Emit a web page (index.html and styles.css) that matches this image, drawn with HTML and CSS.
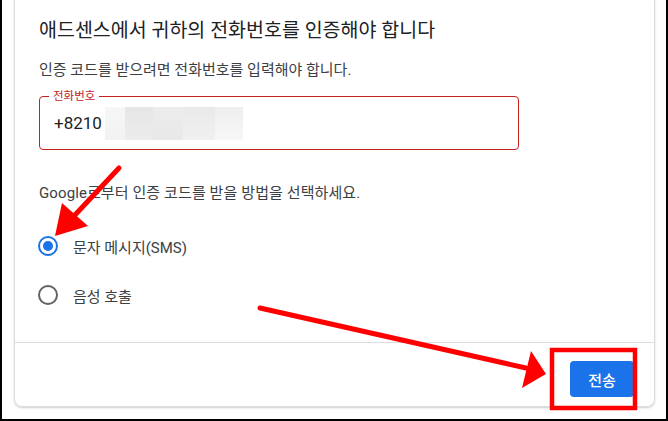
FILE: index.html
```html
<!DOCTYPE html>
<html lang="ko">
<head>
    <meta charset="UTF-8">
    <meta name="viewport" content="width=device-width, initial-scale=1.0">
    <title>전화번호 인증</title>
<link rel="stylesheet" href="styles.css">
</head>
<body>

<div class="frame">
    <div class="card">
        <div class="content">
            <div class="title">애드센스에서 귀하의 전화번호를 인증해야 합니다</div>
            <div class="sub">인증 코드를 받으려면 전화번호를 입력해야 합니다.</div>

            <div class="field">
                <span class="field-label">전화번호</span>
                <span class="field-value">+8210</span>
                <span class="blur">
                    <i class="b1"></i><i class="b2"></i><i class="b3"></i><i class="b4"></i><i class="b5"></i>
                </span>
            </div>

            <div class="sub choose">Google로부터 인증 코드를 받을 방법을 선택하세요.</div>

            <label class="radio checked"><span class="dot"></span>문자 메시지(SMS)</label>
            <label class="radio"><span class="dot"></span>음성 호출</label>
        </div>
        <div class="footer">
            <button class="send">전송</button>
        </div>
    </div>

    <!-- annotations drawn on top of the screenshot -->
    <svg class="marks" width="668" height="421" viewBox="0 0 668 421">
        <line x1="119" y1="168" x2="74" y2="216" stroke="#f00" stroke-width="5" stroke-linecap="round"/>
        <polygon points="55,236 62,203 88,226" fill="#f00"/>
        <line x1="260" y1="308" x2="526" y2="368" stroke="#f00" stroke-width="5" stroke-linecap="round"/>
        <polygon points="546,374 531,351 522,388" fill="#f00"/>
        <rect x="552" y="350" width="83" height="58" fill="none" stroke="#f00" stroke-width="4.5"/>
    </svg>
</div>

</body>
</html>
```

FILE: styles.css
```css
body {
    margin: 0;
    background: #fff;
    font-family: Roboto, "Noto Sans CJK KR", sans-serif;
}

.frame {
    position: relative;
    width: 668px;
    height: 421px;
    box-sizing: border-box;
    border: 2px solid #000;
    border-top: none;
    padding-left: 12px;
}

.card {
    width: 641px;
    height: 407px;
    box-sizing: border-box;
    border: 1px solid #dadce0;
    border-top: none;
    border-radius: 0 0 8px 8px;
    box-shadow: 0 1px 2px rgba(60, 64, 67, 0.25);
    display: flex;
    flex-direction: column;
}

.content {
    flex: 1;
    padding: 18px 0 0 24px;
    border-bottom: 1px solid #dadce0;
}

.title {
    font-size: 19.5px;
    line-height: 26px;
    color: #202124;
}

.sub {
    margin-top: 16px;
    font-size: 15px;
    line-height: 20px;
    color: #3c4043;
}

.field {
    position: relative;
    margin-top: 16px;
    width: 480px;
    height: 54px;
    box-sizing: border-box;
    border: 1px solid #c5221f;
    border-radius: 4px;
    display: flex;
    align-items: center;
    padding-left: 14px;
}

.field-label {
    position: absolute;
    top: -8px;
    left: 9px;
    padding: 0 4px;
    background: #fff;
    font-size: 11.5px;
    line-height: 14px;
    color: #c5221f;
}

.field-value {
    font-size: 17px;
    color: #202124;
}

.blur {
    display: flex;
    height: 33px;
    margin-left: 3px;
}

.blur i {
    display: block;
    width: 28px;
    height: 100%;
}

.blur .b1 { background: linear-gradient(#f6f6f6, #f2f2f2); width: 20px; }
.blur .b2 { background: linear-gradient(#e6e6e6, #ececec); }
.blur .b3 { background: linear-gradient(#ececec, #e8e8e8); width: 30px; }
.blur .b4 { background: linear-gradient(#e9e9e9, #f0f0f0); width: 32px; }
.blur .b5 { background: linear-gradient(#eeeeee, #f7f7f7); }

.choose {
    margin-top: 33px;
    letter-spacing: 0.1px;
}

.radio {
    display: flex;
    align-items: center;
    font-size: 15px;
    color: #3c4043;
    height: 20px;
    margin-top: 33px;
}

.radio + .radio {
    margin-top: 29px;
}

.dot {
    width: 20px;
    height: 20px;
    box-sizing: border-box;
    border: 2px solid #5f6368;
    border-radius: 50%;
    margin: 0 15px 0 -1px;
    position: relative;
}

.checked .dot {
    border-color: #1a73e8;
}

.checked .dot::after {
    content: "";
    position: absolute;
    left: 3px;
    top: 3px;
    width: 10px;
    height: 10px;
    border-radius: 50%;
    background: #1a73e8;
}

.footer {
    height: 63px;
    display: flex;
    justify-content: flex-end;
    align-items: flex-start;
    padding: 18px 20px 0 0;
    box-sizing: border-box;
}

.send {
    width: 64px;
    height: 36px;
    border: none;
    border-radius: 4px;
    background: #1a73e8;
    color: #fff;
    font-family: Roboto, "Noto Sans CJK KR", sans-serif;
    font-size: 15px;
    font-weight: 500;
}

.marks {
    position: absolute;
    left: -2px;
    top: 0;
    pointer-events: none;
}
```
